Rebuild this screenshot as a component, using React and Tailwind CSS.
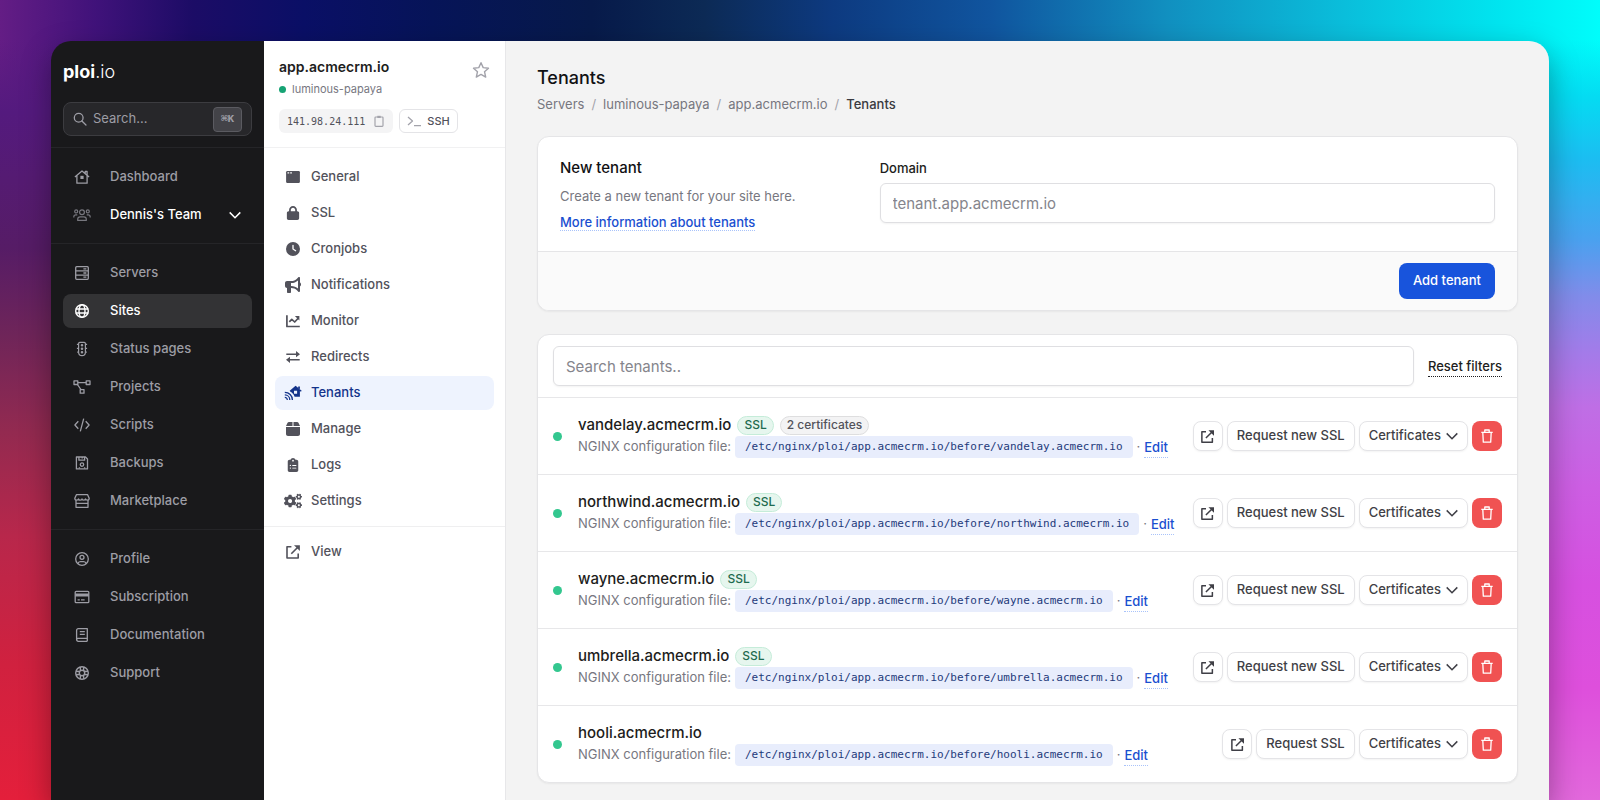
import { FaBox, FaBullhorn, FaClipboardList, FaClock, FaLock } from 'react-icons/fa6';
import { FaCogs } from 'react-icons/fa';

// ─── ICONS ──────────────────────────────────────────────────────────────────
function Icon({ children, className = 'size-4', stroke = 1.3, viewBox = '0 0 16 16' }) {
  return (
    <svg
      viewBox={viewBox}
      className={className}
      fill="none"
      stroke="currentColor"
      strokeWidth={stroke}
      strokeLinejoin="round"
      aria-hidden="true"
    >
      {children}
    </svg>
  );
}

const HomeIcon = () => (
  <Icon>
    <path d="M.9 7.9 8 1.9l7.1 6M2.9 6.6v7.6h10.2V6.6M11.2 4.4V2.5h1.9v3.6" />
    <rect x="6.4" y="6.8" width="3.2" height="3.2" fill="currentColor" stroke="none" />
  </Icon>
);

const TeamIcon = () => (
  <Icon className="h-4 w-[18px]" viewBox="0 0 18 16" stroke={1.2}>
    <circle cx="9" cy="5.2" r="2.4" />
    <circle cx="3.2" cy="4.4" r="1.5" />
    <circle cx="14.8" cy="4.4" r="1.5" />
    <path d="M4.7 13.4v-1.2c0-1.5 1-2.4 2.4-2.4h3.8c1.4 0 2.4.9 2.4 2.4v1.2zM.8 10.6V9.9c0-1.2.8-2 2-2h1.5M17.2 10.6V9.9c0-1.2-.8-2-2-2h-1.5" />
  </Icon>
);

const ServersIcon = () => (
  <Icon>
    <rect x="1.7" y="1.7" width="12.6" height="12.6" rx="1" />
    <path d="M1.7 5.9h12.6M1.7 10.1h12.6M9.4 3.9h3M9.4 8h3M9.4 12.2h3" />
  </Icon>
);

const GlobeIcon = () => (
  <Icon stroke={1.4}>
    <circle cx="8" cy="8" r="6.3" />
    <ellipse cx="8" cy="8" rx="3" ry="6.3" />
    <path d="M1.7 6h12.6M1.7 10h12.6" />
  </Icon>
);

const TrafficIcon = () => (
  <Icon stroke={1.2}>
    <path d="M4.6 2.6c0-.7.5-1.2 1.2-1.2h4.4c.7 0 1.2.5 1.2 1.2v8.6c0 2-1.5 3.4-3.4 3.4s-3.4-1.4-3.4-3.4z" />
    <path d="M4.6 3.4H2.9M4.6 7.4H2.9M4.6 11.2H3.2M11.4 3.4h1.7M11.4 7.4h1.7M11.4 11.2h1.4" />
    <circle cx="8" cy="4.2" r=".7" />
    <circle cx="8" cy="7.7" r=".7" />
    <circle cx="8" cy="11.2" r=".7" />
  </Icon>
);

const ProjectsIcon = () => (
  <Icon className="h-4 w-[18px]" viewBox="0 0 18 16">
    <rect x="1" y="1.9" width="3.8" height="3.6" />
    <rect x="13.2" y="1.9" width="3.8" height="3.6" />
    <rect x="7.2" y="10.6" width="3.8" height="3.6" />
    <path d="M4.8 3.7h8.4M4.4 5.5l3.6 5.1" />
  </Icon>
);

const CodeIcon = () => (
  <Icon>
    <path d="M4.3 4.3.9 8l3.4 3.7M11.7 4.3 15.1 8l-3.4 3.7M9.7 1.6 6.3 14.4" />
  </Icon>
);

const BackupIcon = () => (
  <Icon>
    <path d="M2.4 2h9.1l2 2v9.9H2.4z" />
    <path d="M4.9 2v3.2h5.7V2M8.2 2v1.6" />
    <circle cx="8" cy="9.6" r="1.7" />
    <path d="M5.4 12.2v1.4M10.6 12.2v1.4" />
  </Icon>
);

const MarketIcon = () => (
  <Icon>
    <path d="M2.4 1.7h11.2l1.6 3.6c0 1.2-.9 1.9-1.9 1.9s-1.8-.8-1.8-1.4c0 .8-.7 1.4-1.7 1.4S8 6.6 8 5.8c0 .8-.7 1.4-1.8 1.4s-1.700-.6-1.700-1.400c0 .6-.8 1.400-1.800 1.400S.8 6.500.8 5.300z" />
    <path d="M2 7.3v7h12v-7M2 10.4h12" />
  </Icon>
);

const ProfileIcon = () => (
  <Icon>
    <circle cx="8" cy="8" r="6.3" />
    <circle cx="8" cy="6.3" r="2" />
    <path d="M3.9 12.6c.3-1.3 1.3-2 2.5-2h3.2c1.2 0 2.2.7 2.5 2" />
  </Icon>
);

const CardIcon = () => (
  <Icon>
    <rect x="1.2" y="2.3" width="13.6" height="11.4" rx="1" />
    <path d="M1.2 6h13.6" strokeWidth="3" />
    <path d="M3.6 10.8h2.2M7 10.8h3.6" />
  </Icon>
);

const BookIcon = () => (
  <Icon>
    <path d="M13.3 14.3h-9c-1 0-1.700-.8-1.700-1.800V3.400c0-1 .7-1.700 1.700-1.700h9v9.600h-9c-1 0-1.700.5-1.700 1.200M13.300 11.300v3M5.800 4.700h5M5.800 7.400h5" />
  </Icon>
);

const SupportIcon = () => (
  <Icon stroke={1.4}>
    <circle cx="8" cy="8" r="6.3" />
    <circle cx="8" cy="8" r="2.7" />
    <path d="m6.2 2 .3 3.7M9.800 2l-.3 3.700M6.200 14l.3-3.700M9.800 14l-.3-3.700M2 6.200l3.700.3M2 9.800l3.700-.3M14 6.200l-3.700.3M14 9.800l-3.700-.3" />
  </Icon>
);

const WindowIcon = () => (
  <Icon>
    <rect x="1.1" y="1.9" width="13.8" height="12.2" rx="1.4" fill="currentColor" stroke="none" />
    <path d="M2.5 3.9h1.7M5.2 3.9h1.7" stroke="#fff" strokeWidth="1.3" />
  </Icon>
);

const ChartIcon = () => (
  <Icon stroke={1.7}>
    <path d="M1.9 2.3v11.2h12.9" />
    <path d="m4.3 8.9 2.5-2.6 2.900 2.700 3.700-4" />
    <path d="M9.9 3h4.5v4.500z" fill="currentColor" stroke="none" />
  </Icon>
);

const SwapIcon = () => (
  <Icon stroke={1.6}>
    <path d="M1.3 5.2h12M14.700 10.800h-12" />
    <path d="m11 2.100 4 3.100-4 3.100zM5 7.700l-4 3.100 4 3.100z" fill="currentColor" stroke="none" />
  </Icon>
);

const TenantsIcon = () => (
  <Icon className="h-4 w-[18px]" viewBox="0 0 18 16" stroke={1.3}>
    <path
      d="M11.6.8 17.700 5.800l-.8 1-1-.8v5.700H10.600C9.800 9.300 8.300 7.600 6.400 6.700l-.3-.4L5.700 5.700zM10 5.700v3h3.100v-3zM14.200 1.500h1.700v3l-1.700-1.400z"
      fill="currentColor"
      fillRule="evenodd"
      stroke="none"
    />
    <path d="M.8 7.300c4.200 0 7.600 3.300 7.600 7.600M.8 9.900c2.800 0 5 2.200 5 5M.8 12.400c1.400 0 2.500 1.100 2.500 2.500" />
  </Icon>
);

const ExternalIcon = ({ className = 'size-4' }) => (
  <Icon className={className} stroke={1.6}>
    <path d="M6.4 2.8H2V14h11.200V9.600M6.300 9.700l6.500-6.500" />
    <path d="M9 1.200h5.900v5.900z" fill="currentColor" stroke="none" />
  </Icon>
);

const SearchIcon = () => (
  <Icon className="size-3.5" stroke={1.5}>
    <circle cx="6.500" cy="6.500" r="5" />
    <path d="m10.200 10.200 4.600 4.600" strokeLinecap="round" />
  </Icon>
);

const StarIcon = () => (
  <Icon className="size-[18px]" viewBox="0 0 18 18" stroke={1.4}>
    <path d="m9 1.700 2.200 4.900 5.300.6-4 3.500 1.200 5.400L9 13.400l-4.700 2.700 1.200-5.400-4-3.500 5.300-.6z" />
  </Icon>
);

const ClipboardIcon = () => (
  <Icon className="size-3" viewBox="0 0 12 12" stroke={1.2}>
    <rect x="2" y="2" width="8" height="9.300" rx=".8" />
    <rect x="4.300" y=".8" width="3.400" height="2.200" fill="currentColor" stroke="none" />
  </Icon>
);

const PromptIcon = () => (
  <Icon className="h-3 w-3.5" viewBox="0 0 14 12" stroke={1.3}>
    <path d="m1 2 4.500 4L1 10M7 10.600h7" />
  </Icon>
);

const ChevronIcon = ({ className = 'size-3.5' }) => (
  <Icon className={className} viewBox="0 0 14 14" stroke={1.5}>
    <path d="m1.700 4.400 5.300 5.300 5.300-5.300" strokeLinejoin="miter" />
  </Icon>
);

const TrashIcon = () => (
  <Icon className="size-3.5" viewBox="0 0 14 14">
    <path d="M1.300 3.400h11.400M2.800 3.400l.5 9.700h7.400l.5-9.700M4.800 3.200V1h4.400v2.200" />
  </Icon>
);

// ─── DATA ───────────────────────────────────────────────────────────────────
const mainLinks = [
  { label: 'Servers', icon: <ServersIcon /> },
  { label: 'Sites', icon: <GlobeIcon />, active: true },
  { label: 'Status pages', icon: <TrafficIcon /> },
  { label: 'Projects', icon: <ProjectsIcon /> },
  { label: 'Scripts', icon: <CodeIcon /> },
  { label: 'Backups', icon: <BackupIcon /> },
  { label: 'Marketplace', icon: <MarketIcon /> },
];

const accountLinks = [
  { label: 'Profile', icon: <ProfileIcon /> },
  { label: 'Subscription', icon: <CardIcon /> },
  { label: 'Documentation', icon: <BookIcon /> },
  { label: 'Support', icon: <SupportIcon /> },
];

const siteLinks = [
  { label: 'General', icon: <WindowIcon /> },
  { label: 'SSL', icon: <FaLock className="size-3.5" /> },
  { label: 'Cronjobs', icon: <FaClock className="size-3.5" /> },
  { label: 'Notifications', icon: <FaBullhorn className="size-4" /> },
  { label: 'Monitor', icon: <ChartIcon /> },
  { label: 'Redirects', icon: <SwapIcon /> },
  { label: 'Tenants', icon: <TenantsIcon />, active: true },
  { label: 'Manage', icon: <FaBox className="size-4" /> },
  { label: 'Logs', icon: <FaClipboardList className="size-3.5" /> },
  { label: 'Settings', icon: <FaCogs className="h-4 w-[18px]" /> },
];

const tenants = [
  { domain: 'vandelay.acmecrm.io', ssl: true, certificates: 2 },
  { domain: 'northwind.acmecrm.io', ssl: true },
  { domain: 'wayne.acmecrm.io', ssl: true },
  { domain: 'umbrella.acmecrm.io', ssl: true },
  { domain: 'hooli.acmecrm.io', ssl: false },
];

// ─── SIDEBAR ────────────────────────────────────────────────────────────────
function SidebarLink({ label, icon, active }) {
  return (
    <a
      href="#"
      className={`flex h-[34px] items-center gap-[19px] rounded-lg px-[10px] text-[13px] font-medium ${
        active ? 'bg-[#333335] text-white' : 'text-[#9d9da5] hover:text-white'
      }`}
    >
      <span className="flex w-[18px] shrink-0 justify-center">{icon}</span>
      {label}
    </a>
  );
}

function Sidebar() {
  return (
    <aside className="w-[213px] shrink-0 bg-[#19191b]">
      <div className="border-b border-[#252528] px-3 pt-[19px] pb-[11px]">
        <a href="#" className="block w-fit text-lg leading-6 text-white">
          <span className="font-bold">ploi</span>
          <span className="font-light">.io</span>
        </a>
        <button className="mt-[18px] flex h-[34px] w-full items-center rounded-lg border border-[#3c3c40] bg-[#27272a] px-[9px] text-[#9d9da5]">
          <SearchIcon />
          <span className="ml-1.5 text-[13px]">Search...</span>
          <kbd className="ml-auto flex h-[25px] w-[29px] items-center justify-center rounded border border-[#5b5b61] bg-[#434348] font-['Liberation_Mono','DejaVu_Sans_Mono',monospace] text-[11px] font-bold">
            ⌘K
          </kbd>
        </button>
      </div>

      <nav className="flex flex-col gap-1 border-b border-[#252528] px-3 pt-3 pb-[11px]">
        <SidebarLink label="Dashboard" icon={<HomeIcon />} />
        <button className="flex h-[34px] items-center gap-[19px] rounded-lg px-[10px] text-[13px] font-medium text-white">
          <span className="flex w-[18px] shrink-0 justify-center text-[#77777e]">
            <TeamIcon />
          </span>
          Dennis's Team
          <ChevronIcon className="ml-auto size-3.5" />
        </button>
      </nav>

      <nav className="flex flex-col gap-1 border-b border-[#252528] px-3 pt-3 pb-[11px]">
        {mainLinks.map((link) => (
          <SidebarLink key={link.label} {...link} />
        ))}
      </nav>

      <nav className="flex flex-col gap-1 px-3 pt-3">
        {accountLinks.map((link) => (
          <SidebarLink key={link.label} {...link} />
        ))}
      </nav>
    </aside>
  );
}

// ─── SITE MENU ──────────────────────────────────────────────────────────────
function SiteLink({ label, icon, active }) {
  return (
    <a
      href="#"
      className={`flex h-[34px] items-center gap-[9px] rounded-lg px-[9px] text-[13px] font-medium ${
        active ? 'bg-[#eef3fe] text-[#13338b]' : 'text-[#52525b] hover:bg-zinc-50'
      }`}
    >
      <span className="flex w-[18px] shrink-0 justify-center">{icon}</span>
      {label}
    </a>
  );
}

function SiteMenu() {
  return (
    <aside className="w-[242px] shrink-0 border-r border-[#e7e7e9] bg-white">
      <div className="border-b border-[#f1f1f2] px-[15px] pt-4 pb-[14px]">
        <div className="flex justify-between">
          <div>
            <h2 className="text-[14px] leading-5 font-semibold text-[#1d1d20]">app.acmecrm.io</h2>
            <a href="#" className="mt-1 flex items-center gap-1.5 text-[11px] leading-4 text-[#77777f]">
              <span className="size-[7px] rounded-full bg-[#16a374]" />
              luminous-papaya
            </a>
          </div>
          <button aria-label="Favourite" className="mt-1 h-[18px] text-[#a3a3ab]">
            <StarIcon />
          </button>
        </div>
        <div className="mt-3 flex gap-1.5">
          <button className="flex h-6 items-center gap-2 rounded-md bg-[#f4f4f5] px-2 font-['DejaVu_Sans_Mono',monospace] text-[10px] text-[#52525b]">
            141.98.24.111
            <span className="text-[#a3a3ab]">
              <ClipboardIcon />
            </span>
          </button>
          <button className="flex h-6 items-center gap-1.5 rounded-md border border-[#e4e4e7] px-[7px] text-[11px] font-medium text-[#52525b]">
            <span className="text-[#a3a3ab]">
              <PromptIcon />
            </span>
            SSH
          </button>
        </div>
      </div>

      <nav className="flex flex-col gap-0.5 border-b border-[#efeff0] px-[11px] pt-3 pb-2">
        {siteLinks.map((link) => (
          <SiteLink key={link.label} {...link} />
        ))}
      </nav>
      <nav className="px-[11px] pt-2">
        <SiteLink label="View" icon={<ExternalIcon />} />
      </nav>
    </aside>
  );
}

// ─── CONTENT ────────────────────────────────────────────────────────────────
function Breadcrumbs() {
  return (
    <nav className="mt-0.5 flex gap-[7px] text-[13px] leading-5 text-[#77777f]">
      <a href="#">Servers</a>
      <span className="text-[#a3a3ab]">/</span>
      <a href="#">luminous-papaya</a>
      <span className="text-[#a3a3ab]">/</span>
      <a href="#">app.acmecrm.io</a>
      <span className="text-[#a3a3ab]">/</span>
      <span className="font-medium text-[#3a3a40]">Tenants</span>
    </nav>
  );
}

function NewTenantCard() {
  return (
    <section className="mt-[22px] overflow-hidden rounded-xl border border-[#e5e5e7] bg-white shadow-xs">
      <div className="grid grid-cols-3 gap-6 px-[22px] pt-5 pb-[19px]">
        <div>
          <h2 className="text-[15px] leading-[22px] font-medium text-[#111113]">New tenant</h2>
          <p className="mt-[7px] text-[13px] leading-5 text-[#77777f]">Create a new tenant for your site here.</p>
          <p className="mt-1.5 text-[13px] leading-5 font-medium">
            <a href="#" className="border-b border-dotted border-[#a9c3fa] text-[#1a4fd0]">
              More information about tenants
            </a>
          </p>
        </div>
        <div className="col-span-2">
          <label htmlFor="domain" className="block text-[13px] leading-[22px] font-medium text-[#1d1d20]">
            Domain
          </label>
          <input
            id="domain"
            type="text"
            placeholder="tenant.app.acmecrm.io"
            className="mt-1 block h-10 w-full rounded-md border border-[#dfdfe2] bg-white px-3 text-[15px] shadow-xs outline-none placeholder:text-[#85858c]"
          />
        </div>
      </div>
      <div className="flex justify-end border-t border-[#e5e5e7] bg-[#fafafa] px-[22px] py-[11px]">
        <button className="h-9 rounded-lg bg-[#1854dc] px-[14px] text-[13px] font-medium text-white">Add tenant</button>
      </div>
    </section>
  );
}

const actionClass =
  'flex h-[30px] items-center gap-1 rounded-lg border border-[#e4e4e7] bg-white text-[13px] font-medium text-[#3f3f46] shadow-xs';

function TenantRow({ domain, ssl, certificates }) {
  return (
    <li className="flex items-center border-t border-[#e7e7e9] px-[15px] py-4">
      <span className="size-[9px] shrink-0 rounded-full bg-[#33c78f]" />
      <div className="ml-4 min-w-0 flex-1">
        <div className="flex h-[22px] items-center gap-1.5">
          <h3 className="text-[15px] font-medium text-[#1d1d20]">{domain}</h3>
          {ssl && (
            <span className="flex h-[19px] items-center rounded-full border border-[#c5ecd9] bg-[#e6f6ee] px-1.5 text-[12px] font-medium text-[#1f6b4f]">
              SSL
            </span>
          )}
          {certificates && (
            <span className="flex h-[19px] items-center rounded-full border border-[#dededf] bg-[#f3f3f4] px-1.5 text-[12px] font-medium text-[#52525b]">
              {certificates} certificates
            </span>
          )}
        </div>
        <div className="flex h-[22px] items-center gap-1 text-[13px] whitespace-nowrap text-[#77777f]">
          <span>NGINX configuration file:</span>
          <code className="rounded bg-[#e8edfc] px-[10px] font-['DejaVu_Sans_Mono',monospace] text-[11px] leading-[22px] text-[#1e3a7b]">
            /etc/nginx/ploi/app.acmecrm.io/before/{domain}
          </code>
          <span>·</span>
          <a href="#" className="border-b border-dotted border-[#a9c3fa] leading-5 font-medium text-[#1a4fd0]">
            Edit
          </a>
        </div>
      </div>
      <div className="flex shrink-0 gap-1">
        <button aria-label={`Open ${domain}`} className={`${actionClass} w-[30px] justify-center`}>
          <ExternalIcon className="size-[15px]" />
        </button>
        <button className={`${actionClass} px-[9px]`}>{ssl ? 'Request new SSL' : 'Request SSL'}</button>
        <button className={`${actionClass} pr-2 pl-[9px]`}>
          Certificates
          <ChevronIcon />
        </button>
        <button
          aria-label={`Delete ${domain}`}
          className="flex size-[30px] items-center justify-center rounded-lg bg-[#f05252] text-white"
        >
          <TrashIcon />
        </button>
      </div>
    </li>
  );
}

function TenantList() {
  return (
    <section className="mt-[23px] overflow-hidden rounded-xl border border-[#e5e5e7] bg-white shadow-xs">
      <div className="flex items-center gap-[14px] px-[15px] py-[11px]">
        <input
          type="search"
          aria-label="Search tenants"
          placeholder="Search tenants.."
          className="h-10 min-w-0 flex-1 rounded-md border border-[#dfdfe2] bg-white px-3 text-[15px] shadow-xs outline-none placeholder:text-[#85858c]"
        />
        <button className="border-b border-dotted border-[#1d1d20] text-[13px] leading-5 font-medium text-[#1d1d20]">
          Reset filters
        </button>
      </div>
      <ul>
        {tenants.map((tenant) => (
          <TenantRow key={tenant.domain} {...tenant} />
        ))}
      </ul>
    </section>
  );
}

export default function App() {
  return (
    <div className="relative flex min-h-screen bg-[linear-gradient(to_right,#641d85_0%,#40127a_6%,#1c0c66_12%,#0a0f66_19%,#061458_27%,#071a4a_37%,#0c2a55_44%,#0d3a80_52%,#10559f_62%,#1190c0_73%,#0abedb_84%,#00e6f0_94%,#00fdfb_100%)] font-[Inter,sans-serif]">
      {/* vertical colour runs down both edges */}
      <div className="absolute inset-y-0 left-0 w-20 bg-[linear-gradient(to_bottom,transparent_5%,#541a7e_14%,#561c66_31%,#6f2559_42%,#932a50_54%,#b8274b_67%,#d0213f_83%,#e41f3b_100%)]" />
      <div className="absolute inset-y-0 right-0 w-20 bg-[linear-gradient(to_bottom,transparent_5%,#04dcf2_12%,#1cbdf1_20%,#4aa1ef_30%,#818cea_37%,#a37be9_44%,#bf6ee5_51%,#cd5ee3_61%,#d650e0_73%,#de4fdc_86%,#e268dc_100%)]" />

      {/* ── APP WINDOW ─────────────────────────────────────────────────────── */}
      <div className="relative mx-[51px] mt-[41px] flex min-w-0 flex-1 overflow-hidden rounded-t-[20px] shadow-[0_12px_30px_rgba(0,0,0,0.35)]">
        <Sidebar />
        <SiteMenu />
        <main className="min-w-0 flex-1 bg-[#f3f3f3] px-[31px] pt-[23px] pb-4">
          <h1 className="text-[18px] leading-7 font-medium text-[#111113]">Tenants</h1>
          <Breadcrumbs />
          <NewTenantCard />
          <TenantList />
        </main>
      </div>
    </div>
  );
}
